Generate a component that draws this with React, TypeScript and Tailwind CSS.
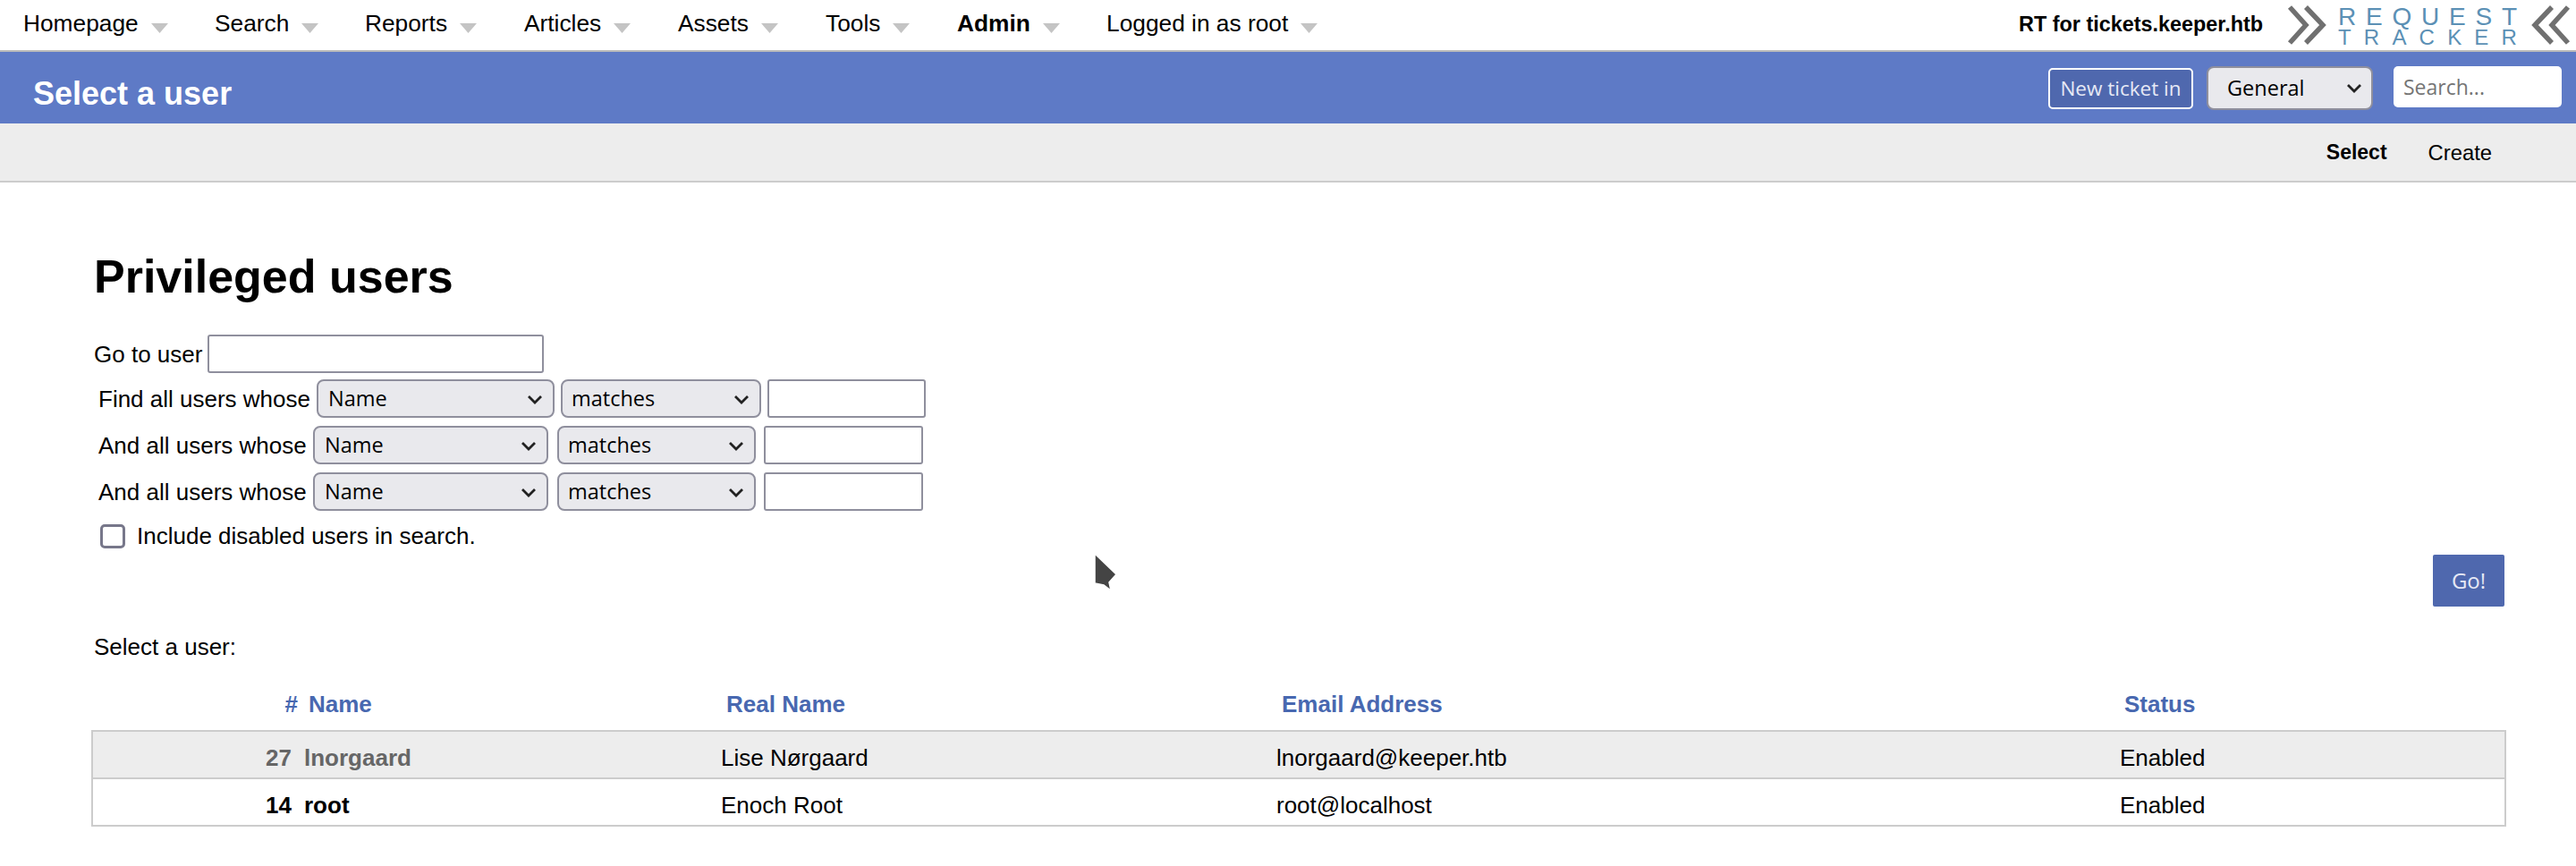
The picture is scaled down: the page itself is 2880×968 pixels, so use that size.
import React from 'react';

const navItems = [
  { label: 'Homepage', width: 'w-[214px]' },
  { label: 'Search', width: 'w-[168px]' },
  { label: 'Reports', width: 'w-[178px]' },
  { label: 'Articles', width: 'w-[172px]' },
  { label: 'Assets', width: 'w-[165px]' },
  { label: 'Tools', width: 'w-[147px]' },
  { label: 'Admin', width: 'w-[167px]', bold: true },
  { label: 'Logged in as root', width: 'w-[320px]' },
];

const Caret = () => (
  <svg width="19" height="11" viewBox="0 0 19 11" className="ml-[14px] mt-[9px] shrink-0">
    <polygon points="0,0 19,0 9.5,11" fill="#c4c4c4" />
  </svg>
);

const Chevron = ({ className }: { className: string }) => (
  <svg width="16" height="10" viewBox="0 0 16 10" className={`absolute pointer-events-none ${className}`}>
    <polyline points="1,1 8,8 15,1" fill="none" stroke="#222" strokeWidth="2.8" />
  </svg>
);

const Select = ({ value, className, chevron, pad }: { value: string; className: string; chevron: string; pad: string }) => (
  <div className={`relative shrink-0 ${className}`}>
    <select
      defaultValue={value}
      className={`w-full h-full appearance-none rounded-[8px] border-2 border-[#8f8f9d] bg-[#e9e9ed] ${pad} text-[23.5px] text-black font-['Open_Sans',sans-serif] outline-none`}
    >
      <option>{value}</option>
    </select>
    <Chevron className={chevron} />
  </div>
);

const FilterRow = ({ label, first }: { label: string; first?: boolean }) => (
  <div className="flex items-center h-[43px] pl-[5px]">
    <span className={first ? 'w-[244px] shrink-0 pt-[2px]' : 'w-[240px] shrink-0 pt-[2px]'}>{label}</span>
    <Select value="Name" pad="pl-[11px]" className={first ? 'w-[266px] h-[43px]' : 'w-[263px] h-[43px]'} chevron="right-[14px] top-[18px]" />
    <Select value="matches" pad="pl-[10px]" className={first ? 'ml-[7px] w-[224px] h-[43px]' : 'ml-[10px] w-[222px] h-[43px]'} chevron="right-[14px] top-[18px]" />
    <input className={first ? 'ml-[7px] w-[177px] h-[43px] rounded-[3px] border-2 border-[#8f8f9d] bg-white' : 'ml-[9px] w-[178px] h-[43px] rounded-[3px] border-2 border-[#8f8f9d] bg-white'} />
  </div>
);

const rows = [
  { id: 27, name: 'lnorgaard', real: 'Lise Nørgaard', email: 'lnorgaard@keeper.htb', disabled: true },
  { id: 14, name: 'root', real: 'Enoch Root', email: 'root@localhost', disabled: false },
];

export default function App() {
  return (
    <div className="w-[2880px] h-[968px] overflow-hidden bg-white text-black font-['Liberation_Sans',sans-serif] text-[26px]">
      {/* top menu */}
      <div className="h-[58px] flex items-center justify-between border-b-2 border-[#bbbbbb]">
        <div className="flex items-center pl-[26px] pb-[3px] text-[26.3px]">
          {navItems.map((item) => (
            <div key={item.label} className={`flex items-center ${item.width} ${item.bold ? 'font-bold' : ''}`}>
              <span>{item.label}</span>
              <Caret />
            </div>
          ))}
        </div>
        <div className="flex items-center pr-[6px]">
          <span className="font-bold text-[23.4px]">RT for tickets.keeper.htb</span>
          <div className="ml-[27px] flex items-center">
            <svg width="46" height="44" viewBox="0 0 46 44">
              <polyline points="3,2 21,22 3,42" fill="none" stroke="#707070" strokeWidth="5.5" />
              <polyline points="21,2 40,22 21,42" fill="none" stroke="#707070" strokeWidth="5.5" />
            </svg>
            <div className="ml-[11px] w-[205px] text-[#5b90b5]">
              <div className="text-[28px] leading-[26px] tracking-[10.8px] whitespace-nowrap">REQUEST</div>
              <div className="text-[24px] leading-[19px] tracking-[14.2px] whitespace-nowrap">TRACKER</div>
            </div>
            <svg width="46" height="44" viewBox="0 0 46 44" className="ml-[9px]">
              <polyline points="43,2 25,22 43,42" fill="none" stroke="#707070" strokeWidth="5.5" />
              <polyline points="25,2 6,22 25,42" fill="none" stroke="#707070" strokeWidth="5.5" />
            </svg>
          </div>
        </div>
      </div>

      {/* title bar */}
      <div className="h-[80px] bg-[#5e7ac6] flex items-center justify-between pl-[37px] pr-[16px]">
        <h1 className="text-white font-bold text-[36px] mt-[14px]">Select a user</h1>
        <div className="flex items-start pt-[1px] font-['Open_Sans',sans-serif] text-[22.5px]">
          <button className="mt-[2px] w-[162px] h-[46px] rounded-[5px] border-2 border-white bg-[#4f68ae] text-[#e6e9f5]">New ticket in</button>
          <Select value="General" pad="pl-[21px]" className="ml-[15px] w-[186px] h-[49px]" chevron="right-[13px] top-[20px]" />
          <input
            placeholder="Search..."
            className="ml-[23px] w-[188px] h-[46px] rounded-[5px] bg-white pl-[11px] text-[23px] placeholder:text-[#757575] outline-none"
          />
        </div>
      </div>

      {/* page menu */}
      <div className="h-[66px] bg-[#ededed] border-b-2 border-[#cccccc] flex items-center justify-end pr-[94px] text-[23.8px]">
        <span className="font-bold text-[23px] pt-[1px]">Select</span>
        <span className="ml-[46px] pt-[1px]">Create</span>
      </div>

      {/* content */}
      <div className="pt-[75px] pl-[105px]">
        <h2 className="font-bold text-[52px] leading-[60px]">Privileged users</h2>
        <div className="mt-[35px] flex items-center h-[43px]">
          <span className="w-[127px] shrink-0 pt-[2px]">Go to user</span>
          <input className="w-[376px] h-[43px] rounded-[3px] border-2 border-[#8f8f9d] bg-white" />
        </div>
        <div className="mt-[7px] flex flex-col gap-[9px]">
          <FilterRow label="Find all users whose" first />
          <FilterRow label="And all users whose" />
          <FilterRow label="And all users whose" />
        </div>
        <div className="mt-[15px] ml-[7px] flex items-center h-[27px]">
          <div className="w-[28px] h-[27px] rounded-[5px] border-[3px] border-[#77778a] bg-white" />
          <span className="ml-[13px]">Include disabled users in search.</span>
        </div>
      </div>

      <div className="mt-[7px] pr-[80px] flex justify-end">
        <button className="w-[80px] h-[58px] rounded-[2px] bg-[#4f68ae] text-[#e6e9f5] text-[24px] font-['Open_Sans',sans-serif]">Go!</button>
      </div>

      <div className="mt-[30px] pl-[105px] leading-[30px]">Select a user:</div>

      <div className="mt-[27px] ml-[102px] w-[2700px] h-[44px] pl-[3px] grid grid-cols-[228px_474px_621px_943px_1fr] items-center font-bold text-[#4868b0] text-[26px]">
        <div className="text-right">#</div>
        <div className="pl-[12px]">Name</div>
        <div className="pl-[5px]">Real Name</div>
        <div className="pl-[5px]">Email Address</div>
        <div className="pl-[4px]">Status</div>
      </div>

      <div className="mt-[7px] ml-[102px] w-[2700px] border-2 border-[#cccccc]">
        {rows.map((row) => (
          <div
            key={row.id}
            className={`grid grid-cols-[222px_480px_621px_943px_1fr] pt-[8px] items-center ${
              row.disabled ? 'bg-[#ededed] h-[53px] border-b-2 border-[#cccccc]' : 'bg-white h-[51px]'
            }`}
          >
            <div className={`text-right font-bold ${row.disabled ? 'text-[#666666]' : ''}`}>{row.id}</div>
            <div className={`pl-[14px] font-bold ${row.disabled ? 'text-[#666666]' : ''}`}>{row.name}</div>
            <div>{row.real}</div>
            <div>{row.email}</div>
            <div>Enabled</div>
          </div>
        ))}
      </div>

      {/* mouse pointer from the capture */}
      <svg width="28" height="44" viewBox="0 0 28 44" className="absolute left-[1222px] top-[618px]">
        <polygon points="2,1 26,24 18,33 20,42 12,36 2,34" fill="#444444" stroke="#ffffff" strokeWidth="1.5" />
      </svg>
    </div>
  );
}
